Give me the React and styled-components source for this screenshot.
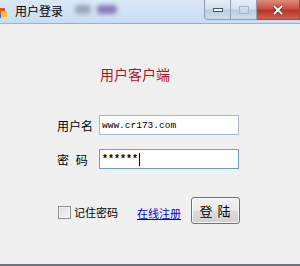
import React from 'react';
import styled, { createGlobalStyle } from 'styled-components';

const GlobalStyle = createGlobalStyle`
  html, body { margin: 0; padding: 0; background: #f0f0f0; }
  body { font-family: "Noto Sans CJK SC", "Liberation Sans", sans-serif; }
`;

const Window = styled.div`
  width: 300px;
  height: 266px;
  display: flex;
  flex-direction: column;
  overflow: hidden;
`;

const TitleBar = styled.div`
  height: 23px;
  flex: none;
  display: flex;
  align-items: flex-start;
  background: linear-gradient(#dbe8f7, #c9ddf3);
  border-bottom: 1px solid #9fb1c7;
`;

const TitleIcon = styled.svg`
  margin: 8px 0 0 -4px;
  flex: none;
`;

const TitleText = styled.span`
  margin: 3px 0 0 7px;
  font-size: 12px;
  line-height: 16px;
  color: #000;
`;

const Ghost = styled.span`
  margin: 5px 0 0 ${(p) => p.$gap}px;
  width: ${(p) => p.$w}px;
  height: 9px;
  border-radius: 4px;
  background: ${(p) => p.$color};
  filter: blur(2px);
`;

const Controls = styled.div`
  margin-left: auto;
  display: flex;
  height: 20px;
`;

const CtrlButton = styled.div`
  width: ${(p) => (p.$close ? 42 : 25)}px;
  height: 19px;
  display: flex;
  align-items: center;
  justify-content: center;
  border: 1px solid ${(p) => (p.$close ? '#a8473f' : '#8e9db3')};
  border-top: none;
  border-left-width: ${(p) => (p.$first ? 1 : 0)}px;
  border-radius: ${(p) => (p.$first ? '0 0 0 4px' : '0')};
  background: ${(p) =>
    p.$close
      ? 'linear-gradient(#dc8d7c, #c9503f 45%, #b93426 55%, #cf6350)'
      : 'linear-gradient(#e6eef8, #d3e0ef 45%, #bccde3 55%, #cbdcee)'};
`;

const Client = styled.div`
  flex: 1;
  background: #f0f0f0;
  border-bottom: 2px solid #6b7380;
  padding-left: 57px;
  display: flex;
  flex-direction: column;
`;

const Heading = styled.div`
  margin: 42px 0 0 43px;
  font-size: 14px;
  line-height: 16px;
  color: #b3131c;
`;

const FieldRow = styled.div`
  display: flex;
  align-items: center;
  height: 20px;
  margin-top: ${(p) => p.$top}px;
`;

const Label = styled.span`
  width: 42px;
  font-size: 12px;
  color: #000;
  white-space: pre;
  letter-spacing: ${(p) => (p.$wide ? 2 : 0)}px;
`;

const Input = styled.div`
  width: 136px;
  height: 18px;
  background: #fff;
  border: 1px solid #a6b8cf;
  display: flex;
  align-items: center;
  padding-left: 2px;
  box-sizing: content-box;
  font-family: "Liberation Mono", monospace;
  font-size: ${(p) => (p.$secret ? 10 : 9.5)}px;
  font-weight: ${(p) => (p.$secret ? 700 : 400)};
  color: #000;
  ${(p) => p.$secret && 'border-color: #6b9ad6;'}
`;

const Caret = styled.span`
  width: 1px;
  height: 13px;
  background: #000;
  margin-left: 1px;
`;

const BottomRow = styled.div`
  display: flex;
  align-items: center;
  margin-top: 28px;
  height: 27px;
`;

const CheckBox = styled.span`
  margin: 3px 0 0 1px;
  width: 11px;
  height: 11px;
  border: 1px solid #8f8f8f;
  background: linear-gradient(135deg, #dcdcdc, #f7f7f7);
  box-shadow: inset 0 0 0 1px #f4f4f4;
`;

const CheckText = styled.span`
  margin: 3px 0 0 3px;
  font-size: 11px;
  color: #000;
`;

const Link = styled.a`
  margin: 5px 0 0 19px;
  font-size: 11px;
  color: #0000ee;
  text-decoration: underline;
`;

const Button = styled.button`
  margin-left: 10px;
  width: 49px;
  height: 27px;
  border: 1px solid #707070;
  border-radius: 3px;
  background: linear-gradient(#f2f2f2, #ebebeb 50%, #dddddd 51%, #cfcfcf);
  box-shadow: inset 0 0 0 1px #fcfcfc;
  font-family: "Noto Sans CJK SC", sans-serif;
  font-size: 13px;
  letter-spacing: 1px;
  color: #000;
  white-space: pre;
  padding: 0;
`;

export default function App() {
  return (
    <Window>
      <GlobalStyle />
      <TitleBar>
        <TitleIcon width="12" height="10" viewBox="0 0 12 10">
          <rect x="0" y="0" width="9" height="7" fill="#e0502a" />
          <rect x="5" y="3" width="6" height="6" fill="#f2c230" />
          <rect x="0" y="6" width="5" height="4" fill="#3a6fc4" />
        </TitleIcon>
        <TitleText>用户登录</TitleText>
        <Ghost $gap={12} $w={16} $color="#9aa6b4" />
        <Ghost $gap={6} $w={20} $color="#8a7ab8" />
        <Controls>
          <CtrlButton $first>
            <svg width="10" height="4"><rect x="0.5" y="0.5" width="9" height="3" fill="#fff" stroke="#44536a" /></svg>
          </CtrlButton>
          <CtrlButton>
            <svg width="10" height="8"><rect x="0.5" y="0.5" width="9" height="7" fill="none" stroke="#a9b6c8" /><rect x="2" y="2" width="6" height="4" fill="#cfdae8" /></svg>
          </CtrlButton>
          <CtrlButton $close>
            <svg width="12" height="10" viewBox="0 0 12 10">
              <path d="M2 1 L10 9 M10 1 L2 9" stroke="#5b2a22" strokeWidth="3.4" />
              <path d="M2 1 L10 9 M10 1 L2 9" stroke="#fff" strokeWidth="2" />
            </svg>
          </CtrlButton>
        </Controls>
      </TitleBar>
      <Client>
        <Heading>用户客户端</Heading>
        <FieldRow $top={33}>
          <Label>用户名</Label>
          <Input>www.cr173.com</Input>
        </FieldRow>
        <FieldRow $top={14}>
          <Label $wide>{'密 码'}</Label>
          <Input $secret>******<Caret /></Input>
        </FieldRow>
        <BottomRow>
          <CheckBox />
          <CheckText>记住密码</CheckText>
          <Link>在线注册</Link>
          <Button>{'登 陆'}</Button>
        </BottomRow>
      </Client>
    </Window>
  );
}
